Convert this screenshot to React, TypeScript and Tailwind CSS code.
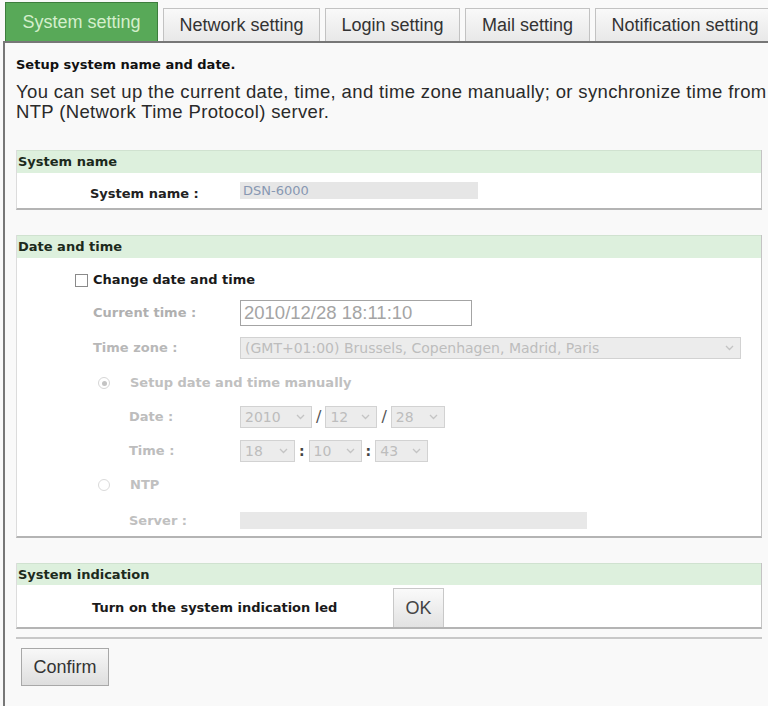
import React from "react";

const tahoma = { fontFamily: '"DejaVu Sans", Verdana, sans-serif' };
const arial = { fontFamily: '"Liberation Sans", Arial, sans-serif' };

function Chevron() {
  return (
    <svg width="9" height="6" viewBox="0 0 9 6" className="shrink-0">
      <path d="M1 1 L4.5 4.5 L8 1" fill="none" stroke="#c4c4c4" strokeWidth="1.3" />
    </svg>
  );
}

function Select({ value, width }: { value: string; width: string }) {
  return (
    <div
      className={`flex h-[22px] items-center justify-between border border-[#d2d2d2] bg-[#ececec] pl-[4px] pr-[6px] text-[14px] text-[#bdbdbd] ${width}`}
      style={tahoma}
    >
      <span>{value}</span>
      <Chevron />
    </div>
  );
}

function Header({ title, h }: { title: string; h: string }) {
  return (
    <div
      className={`flex items-center border-t border-[#d0e2d0] bg-[#ddf0dd] px-[1px] text-[13px] font-bold leading-[16px] text-[#1c2a1c] ${h}`}
      style={tahoma}
    >
      {title}
    </div>
  );
}

const tabs = [
  { label: "Network setting", w: "w-[157px]" },
  { label: "Login setting", w: "w-[135px]" },
  { label: "Mail setting", w: "w-[125px]" },
  { label: "Notification setting", w: "w-[180px]" },
];

const box =
  "border-b-2 border-l border-r border-b-[#b4b4b4] border-l-[#dcdcdc] border-r-[#c4c4c4] bg-white";

export default function App() {
  return (
    <div className="h-[706px] w-[768px] overflow-hidden bg-[#f9f9f9]">
      {/* tabs */}
      <div className="flex h-[41px] items-end gap-[5px] pl-[5px]">
        <div
          className="flex h-[39px] w-[153px] shrink-0 items-center justify-center border border-b-0 border-[#3d7d3d] bg-[#58a958] text-[18px] text-[#d4efcc]"
          style={arial}
        >
          System setting
        </div>
        {tabs.map((t) => (
          <div
            key={t.label}
            className={`flex h-[33px] shrink-0 items-center justify-center border border-b-0 border-[#c2c2c2] bg-gradient-to-b from-[#f9f9f9] to-[#e8e8e8] text-[18px] text-[#333] ${t.w}`}
            style={arial}
          >
            {t.label}
          </div>
        ))}
      </div>

      {/* panel */}
      <div className="ml-[3px] h-full border-l-2 border-t-2 border-[#777] pl-[11px] pr-[6px]">
        <div className="mt-[14px] text-[13px] font-bold leading-[16px] text-[#111]" style={tahoma}>
          Setup system name and date.
        </div>
        <p
          className="mt-[9px] whitespace-nowrap text-[18.5px] leading-[20px] tracking-[0.35px] text-[#2a2a2a]"
          style={arial}
        >
          You can set up the current date, time, and time zone manually; or synchronize time from
          <br />
          NTP (Network Time Protocol) server.
        </p>

        {/* system name */}
        <div className={`mt-[28px] ${box}`}>
          <Header title="System name" h="h-[23px]" />
          <div className="flex h-[35px] items-center">
            <div
              className="w-[223px] shrink-0 pl-[73px] pt-[6px] text-[13px] font-bold text-[#222]"
              style={tahoma}
            >
              System name :
            </div>
            <div
              className="flex h-[17px] w-[238px] items-center bg-[#e6e6e6] pl-[3px] text-[13px] text-[#8898b2]"
              style={tahoma}
            >
              DSN-6000
            </div>
          </div>
        </div>

        {/* date and time */}
        <div className={`mt-[25px] ${box}`}>
          <Header title="Date and time" h="h-[23px]" />
          <div className="pb-[7px] pt-[14px] text-[13px] leading-[16px]" style={tahoma}>
            <div className="flex items-center pl-[58px] font-bold text-[#1a1a1a]">
              <span className="mr-[5px] inline-block h-[13px] w-[13px] border border-[#8a8a8a] bg-white" />
              Change date and time
            </div>

            <div className="mt-[12px] flex items-center">
              <div className="w-[223px] shrink-0 pl-[76px] font-bold text-[#b0b0b0]">Current time :</div>
              <div
                className="flex h-[26px] w-[232px] items-center border border-[#a4a4a4] bg-white pl-[3px] text-[18.5px] text-[#a4a4a4]"
                style={arial}
              >
                2010/12/28 18:11:10
              </div>
            </div>

            <div className="mt-[11px] flex items-center">
              <div className="w-[223px] shrink-0 pl-[76px] font-bold text-[#b8b8b8]">Time zone :</div>
              <Select value="(GMT+01:00) Brussels, Copenhagen, Madrid, Paris" width="w-[501px]" />
            </div>

            <div className="mt-[16px] flex items-center font-bold text-[#c0c0c0]">
              <span className="ml-[81px] mr-[20px] flex h-[12px] w-[12px] items-center justify-center rounded-full border border-[#d6d6d6]">
                <span className="h-[5px] w-[5px] rounded-full bg-[#c4c4c4]" />
              </span>
              Setup date and time manually
            </div>

            <div className="mt-[15px] flex items-center">
              <div className="w-[223px] shrink-0 pl-[112px] font-bold text-[#bdbdbd]">Date :</div>
              <Select value="2010" width="w-[72px]" />
              <span className="px-[4px] text-[16px] text-[#555]">/</span>
              <Select value="12" width="w-[52px]" />
              <span className="px-[4px] text-[16px] text-[#555]">/</span>
              <Select value="28" width="w-[54px]" />
            </div>

            <div className="mt-[12px] flex items-center">
              <div className="w-[223px] shrink-0 pl-[112px] font-bold text-[#bdbdbd]">Time :</div>
              <Select value="18" width="w-[55px]" />
              <span className="px-[4px] text-[14px] font-bold text-[#444]">:</span>
              <Select value="10" width="w-[53px]" />
              <span className="px-[4px] text-[14px] font-bold text-[#444]">:</span>
              <Select value="43" width="w-[53px]" />
            </div>

            <div className="mt-[15px] flex items-center font-bold text-[#c0c0c0]">
              <span className="ml-[81px] mr-[20px] h-[12px] w-[12px] rounded-full border border-[#dadada]" />
              NTP
            </div>

            <div className="mt-[19px] flex h-[17px] items-center">
              <div className="w-[223px] shrink-0 pl-[112px] font-bold text-[#c0c0c0]">Server :</div>
              <div className="h-[17px] w-[347px] bg-[#e8e8e8]" />
            </div>
          </div>
        </div>

        {/* system indication */}
        <div className={`mt-[25px] ${box}`}>
          <Header title="System indication" h="h-[22px]" />
          <div className="flex h-[42px] items-end">
            <div
              className="flex h-[39px] w-[376px] shrink-0 items-center whitespace-nowrap pl-[75px] text-[13px] font-bold text-[#1a1a1a]"
              style={tahoma}
            >
              Turn on the system indication led
            </div>
            <div
              className="flex h-[39px] w-[51px] items-center justify-center border border-b-0 border-[#c8c8c8] bg-gradient-to-b from-[#fafafa] to-[#e2e2e2] text-[18px] text-[#444]"
              style={arial}
            >
              OK
            </div>
          </div>
        </div>

        <div className="mt-[8px] border-t-2 border-[#c8c8c8]" />

        <div
          className="ml-[5px] mt-[9px] flex h-[38px] w-[88px] items-center justify-center border border-[#a8a8a8] bg-gradient-to-b from-[#f8f8f8] to-[#dedede] text-[18px] text-[#333]"
          style={arial}
        >
          Confirm
        </div>
      </div>
    </div>
  );
}
